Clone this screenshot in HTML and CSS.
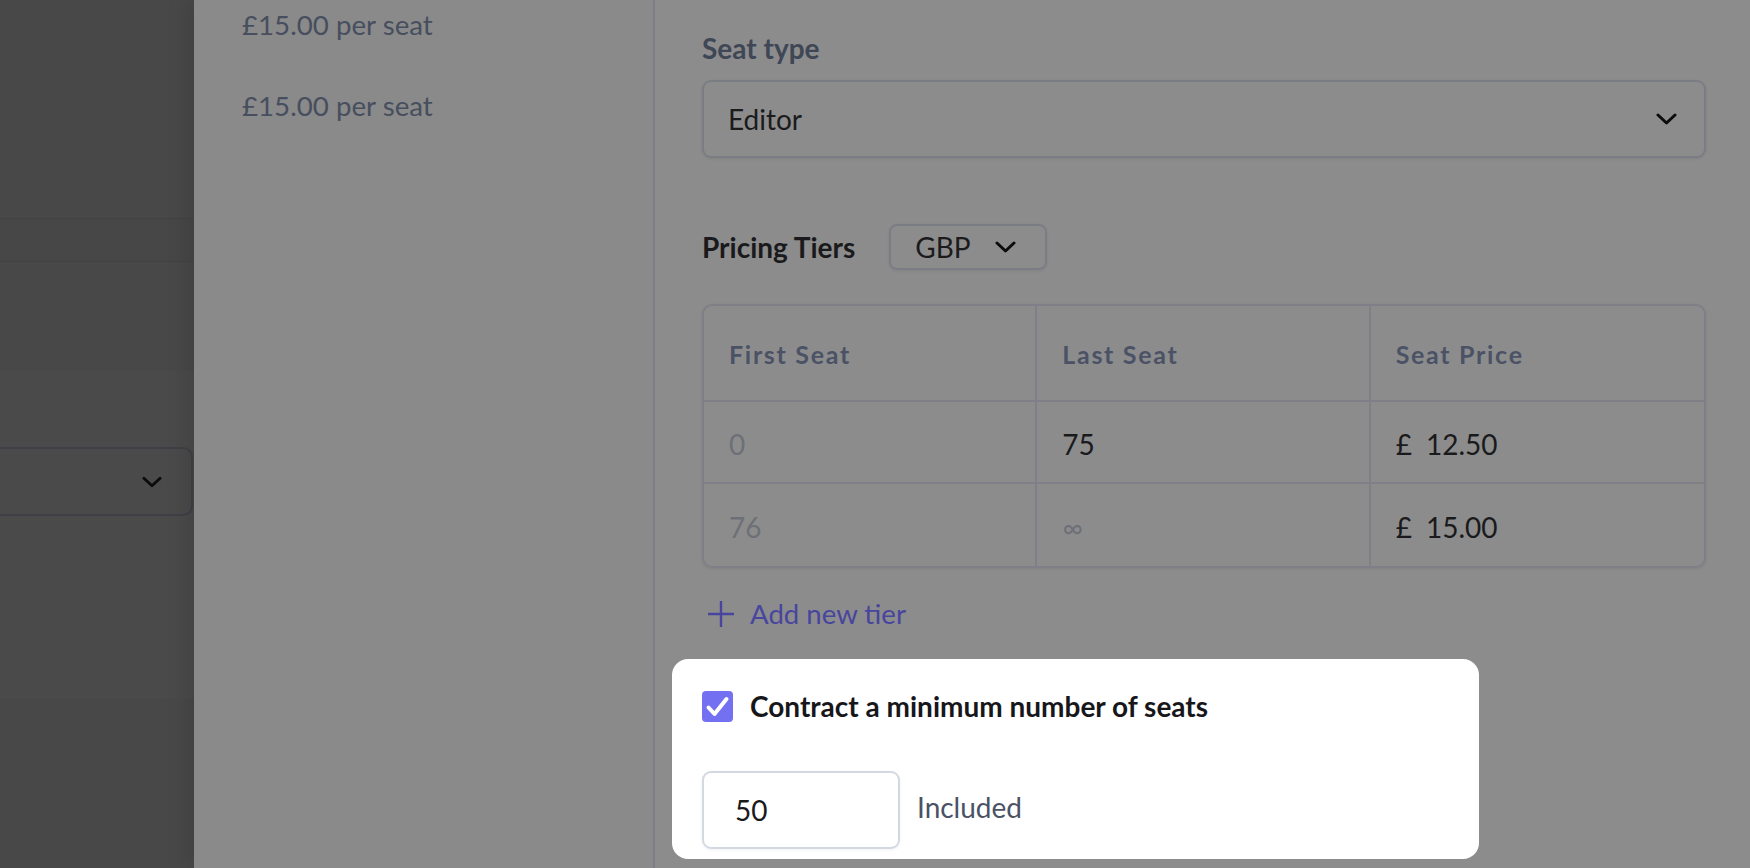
FILE: index.html
```html
<!DOCTYPE html>
<html lang="en">
<head>
<meta charset="utf-8">
<title>Seat pricing</title>
<link rel="stylesheet" href="styles.css">
</head>
<body>
<div class="app">
  <aside class="bg-app">
    <div class="bg-band"></div>
    <div class="bg-zone">
      <div class="bg-select">
        <svg class="chev" viewBox="0 0 21 12" width="20" height="12"><polyline points="2,2 10.5,10 19,2"/></svg>
      </div>
    </div>
  </aside>

  <div class="sheet">
    <section class="summary">
      <p class="price">£15.00 per seat</p>
      <p class="price">£15.00 per seat</p>
    </section>

    <section class="editor">
      <label class="field-label">Seat type</label>
      <div class="select">
        <span>Editor</span>
        <svg class="chev" viewBox="0 0 21 12" width="21" height="12"><polyline points="2,2 10.5,10 19,2"/></svg>
      </div>

      <div class="tiers-head">
        <h3 class="tiers-title">Pricing Tiers</h3>
        <div class="currency">
          <span>GBP</span>
          <svg class="chev" viewBox="0 0 21 12" width="21" height="12"><polyline points="2,2 10.5,10 19,2"/></svg>
        </div>
      </div>

      <table class="tiers">
        <thead>
          <tr><th>First Seat</th><th>Last Seat</th><th>Seat Price</th></tr>
        </thead>
        <tbody>
          <tr><td class="muted">0</td><td>75</td><td><span class="cur">£</span>12.50</td></tr>
          <tr><td class="muted">76</td><td class="muted">∞</td><td><span class="cur">£</span>15.00</td></tr>
        </tbody>
      </table>

      <button class="add-tier" type="button">
        <svg viewBox="0 0 28 28" width="28" height="28"><path d="M14 1V27M1 14H27"/></svg>
        <span>Add new tier</span>
      </button>

      <div class="spotlight">
        <label class="check-row">
          <span class="checkbox"><svg viewBox="0 0 31 31" width="31" height="31"><polyline points="6.5,16.5 12.5,23 24.5,8"/></svg></span>
          <span>Contract a minimum number of seats</span>
        </label>
        <div class="min-row">
          <div class="num-input">50</div>
          <span class="included">Included</span>
        </div>
      </div>
    </section>
  </div>
</div>
</body>
</html>
```

FILE: styles.css
```css
* { box-sizing: border-box; }

html, body {
  margin: 0;
  width: 1750px;
  height: 868px;
  overflow: hidden;
}

body {
  font-family: Lato, "Open Sans", "Liberation Sans", sans-serif;
  background: #484848;
}

.app {
  display: flex;
  height: 868px;
}

/* dimmed app behind the sheet */
.bg-app {
  width: 194px;
  flex: none;
  background: #484848;
  padding-top: 218px;
  display: flex;
  flex-direction: column;
}

.bg-band {
  height: 44px;
  border-top: 1px solid #424242;
  border-bottom: 1px solid #424242;
  background: #474747;
}

.bg-zone {
  margin-top: 109px;
  height: 328px;
  background: #4a4a4a;
  padding-top: 76px;
}

.bg-select {
  height: 69px;
  margin-right: 1px;
  border: 2px solid #3f4045;
  border-left: none;
  border-radius: 0 10px 10px 0;
  background: #4a4a4a;
  display: flex;
  align-items: center;
  justify-content: flex-end;
  padding-right: 29px;
}

.chev polyline {
  fill: none;
  stroke: #0c0c0e;
  stroke-width: 3;
  stroke-linecap: round;
  stroke-linejoin: round;
}

/* slide-over sheet */
.sheet {
  flex: 1;
  display: flex;
  background: #8c8c8c;
  box-shadow: -8px 0 20px rgba(0, 0, 0, 0.10);
}

.summary {
  width: 461px;
  flex: none;
  background: #8a8a8a;
  border-right: 2px solid #7e7f85;
  padding: 9px 48px 0;
}

.price {
  margin: 0 0 49px;
  font-size: 27.7px;
  line-height: 32px;
  color: #474e5e;
}

.editor {
  flex: 1;
  padding: 32px 44px 0 47px;
  display: flex;
  flex-direction: column;
}

.field-label {
  display: block;
  font-size: 28px;
  font-weight: 700;
  line-height: 32px;
  color: #3f4656;
  margin-bottom: 16px;
}

.select {
  height: 78px;
  border: 2px solid #7b7d84;
  border-radius: 9px;
  box-shadow: 0 1px 3px rgba(0, 0, 0, 0.08);
  display: flex;
  align-items: center;
  justify-content: space-between;
  padding: 0 27px 0 24px;
  font-size: 28px;
  color: #1b1b1d;
}

.tiers-head {
  margin-top: 66px;
  display: flex;
  align-items: center;
  gap: 34px;
}

.tiers-title {
  margin: 0;
  font-size: 28px;
  font-weight: 700;
  line-height: 32px;
  color: #1a1a1c;
}

.currency {
  width: 158px;
  height: 46px;
  border: 2px solid #7b7d84;
  border-radius: 8px;
  box-shadow: 0 1px 3px rgba(0, 0, 0, 0.08);
  display: flex;
  align-items: center;
  justify-content: space-between;
  padding: 0 29px 0 24px;
  font-size: 28px;
  color: #1b1b1d;
}

.tiers {
  margin-top: 34px;
  width: 100%;
  table-layout: fixed;
  border-collapse: separate;
  border-spacing: 0;
  border: 2px solid #7f8087;
  border-radius: 10px;
  box-shadow: 0 1px 3px rgba(0, 0, 0, 0.08);
}

.tiers th,
.tiers td {
  text-align: left;
  padding: 0 25px;
  border-right: 2px solid #7f8087;
  border-bottom: 2px solid #7f8087;
}

.tiers th:last-child,
.tiers td:last-child { border-right: none; }

.tiers tbody tr:last-child td { border-bottom: none; }

.tiers th {
  height: 96px;
  padding-top: 2px;
  font-size: 25px;
  font-weight: 700;
  letter-spacing: 1.7px;
  color: #4b5266;
}

.tiers td {
  height: 82px;
  padding-top: 3px;
  font-size: 28px;
  color: #1a1a1c;
}

.tiers td.muted { color: #6d7077; }

.cur { margin-right: 14px; }

.add-tier {
  margin-top: 30px;
  align-self: flex-start;
  display: flex;
  align-items: center;
  gap: 15px;
  padding: 0 0 0 5px;
  background: none;
  border: 0;
  font-family: inherit;
  font-size: 27.6px;
  line-height: 32px;
  color: #48459e;
}

.add-tier path {
  fill: none;
  stroke: #48459e;
  stroke-width: 2.4;
}

/* highlighted (tour spotlight) block */
.spotlight {
  margin-top: 29px;
  margin-left: -30px;
  width: 807px;
  background: #ffffff;
  border-radius: 16px;
  padding: 31px 30px 10px;
}

.check-row {
  display: flex;
  align-items: center;
  gap: 17px;
  font-size: 28px;
  font-weight: 700;
  line-height: 32px;
  color: #17171b;
}

.checkbox {
  width: 31px;
  height: 31px;
  border-radius: 4px;
  background: #7370f1;
  display: flex;
}

.checkbox polyline {
  fill: none;
  stroke: #ffffff;
  stroke-width: 4;
  stroke-linecap: round;
  stroke-linejoin: round;
}

.min-row {
  margin-top: 49px;
  display: flex;
  align-items: center;
  gap: 17px;
}

.num-input {
  width: 198px;
  height: 78px;
  border: 2px solid #d3d8e2;
  border-radius: 9px;
  box-shadow: 0 1px 3px rgba(0, 0, 0, 0.06);
  display: flex;
  align-items: center;
  padding-left: 31px;
  font-size: 28px;
  color: #1a1a1c;
}

.included {
  margin-bottom: 6px;
  font-size: 28px;
  color: #4a5265;
}
```
